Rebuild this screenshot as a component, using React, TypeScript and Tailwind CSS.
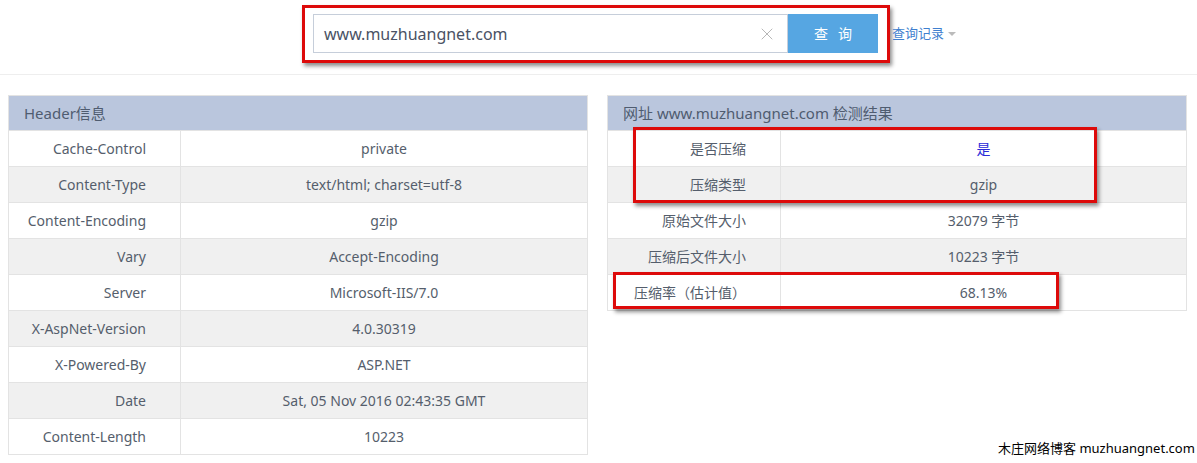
import { X } from "lucide-react";

const headerRows: [string, string][] = [
  ["Cache-Control", "private"],
  ["Content-Type", "text/html; charset=utf-8"],
  ["Content-Encoding", "gzip"],
  ["Vary", "Accept-Encoding"],
  ["Server", "Microsoft-IIS/7.0"],
  ["X-AspNet-Version", "4.0.30319"],
  ["X-Powered-By", "ASP.NET"],
  ["Date", "Sat, 05 Nov 2016 02:43:35 GMT"],
  ["Content-Length", "10223"],
];

const resultRows: [string, string][] = [
  ["是否压缩", "是"],
  ["压缩类型", "gzip"],
  ["原始文件大小", "32079 字节"],
  ["压缩后文件大小", "10223 字节"],
  ["压缩率（估计值）", "68.13%"],
];

const font = { fontFamily: '"Noto Sans", "Noto Sans CJK SC", sans-serif' };

function InfoTable({
  title,
  rows,
  labelWidth,
  blueFirst,
}: {
  title: string;
  rows: [string, string][];
  labelWidth: string;
  blueFirst?: boolean;
}) {
  return (
    <table className="w-[580px] table-fixed border-collapse text-[14px] text-[#555e6c]">
      <colgroup>
        <col className={labelWidth} />
        <col />
      </colgroup>
      <thead>
        <tr>
          <th
            colSpan={2}
            className="h-[35px] border border-[#e3e3e3] bg-[#bac6dd] pl-[15px] text-left text-[15px] font-normal text-[#4f5c70]"
          >
            {title}
          </th>
        </tr>
      </thead>
      <tbody>
        {rows.map(([k, v], i) => (
          <tr key={k} className={i % 2 === 1 ? "bg-[#f0f0f0]" : "bg-white"}>
            <td className="h-[36px] border border-[#e3e3e3] pr-[34px] text-right">{k}</td>
            <td className="h-[36px] border border-[#e3e3e3] text-center">
              {blueFirst && i === 0 ? <span className="text-[#2a2ad8]">{v}</span> : v}
            </td>
          </tr>
        ))}
      </tbody>
    </table>
  );
}

export default function App() {
  return (
    <div className="relative h-[463px] w-[1197px] overflow-hidden bg-white" style={font}>
      {/* Search bar */}
      <div className="flex h-[75px] items-start border-b border-[#eeeeee] pt-[5px]">
        <div className="ml-[302px] flex w-[588px] border-[3px] border-[#dd0a0a] pb-[7px] pl-[8px] pr-[9px] pt-[6px] shadow-[2px_3px_4px_rgba(0,0,0,0.45)]">
          <div className="flex h-[39px] flex-1 items-center border border-[#c6ceda] pl-[10px] pr-[10px]">
            <span className="flex-1 text-[16px] text-[#4a5264]">www.muzhuangnet.com</span>
            <X className="h-[20px] w-[20px] text-[#a8a8a8]" strokeWidth={1} />
          </div>
          <button className="h-[39px] w-[90px] bg-[#56a6e2] text-[14px] tracking-[10px] text-white">
            <span className="pl-[10px]">查询</span>
          </button>
        </div>
        <div className="ml-[2px] flex h-[58px] items-center gap-[4px]">
          <span className="text-[13px] text-[#3f7fcf]">查询记录</span>
          <span className="h-0 w-0 border-x-[4px] border-t-[4px] border-x-transparent border-t-[#bbbbbb]" />
        </div>
      </div>

      {/* Tables */}
      <div className="flex items-start gap-[19px] pl-[8px] pt-[20px]">
        <InfoTable title="Header信息" rows={headerRows} labelWidth="w-[172px]" />
        <div className="relative">
          <InfoTable title="网址 www.muzhuangnet.com 检测结果" rows={resultRows} labelWidth="w-[173px]" blueFirst />
          {/* annotation boxes */}
          <div className="pointer-events-none absolute left-[26px] top-[32px] h-[76px] w-[464px] border-[3px] border-[#dd0a0a] shadow-[2px_3px_4px_rgba(0,0,0,0.45)]" />
          <div className="pointer-events-none absolute left-[6px] top-[177px] h-[37px] w-[446px] border-[3px] border-[#dd0a0a] shadow-[2px_3px_4px_rgba(0,0,0,0.45)]" />
        </div>
      </div>

      {/* Watermark */}
      <div className="absolute bottom-[5px] left-[998px] text-[13px] text-black">木庄网络博客 muzhuangnet.com</div>
    </div>
  );
}
